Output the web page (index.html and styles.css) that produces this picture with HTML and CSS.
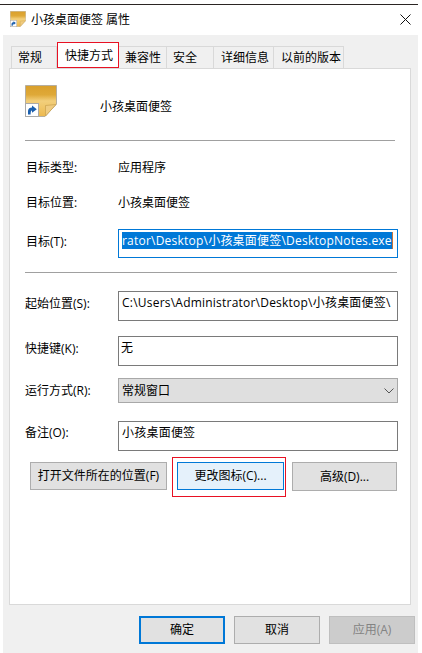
FILE: index.html
```html
<!DOCTYPE html>
<html lang="zh-CN">
<head>
    <meta charset="UTF-8">
    <title>小孩桌面便签 属性</title>
    <link rel="stylesheet" href="styles.css">
</head>
<body>
    <div class="dialog">
        <div class="titlebar">
            <svg class="title-icon" width="16" height="16" viewBox="0 0 32 32">
                <defs>
                    <linearGradient id="noteFill" x1="0" y1="0" x2="0" y2="1">
                        <stop offset="0" stop-color="#d99f2b"/>
                        <stop offset="0.3" stop-color="#dfa938"/>
                        <stop offset="0.5" stop-color="#f2cf7c"/>
                        <stop offset="1" stop-color="#edb94e"/>
                    </linearGradient>
                    <symbol id="noteIcon" viewBox="0 0 32 32">
                        <path d="M0.5 0.5 H31.5 V19 L20 31.5 H0.5 Z" fill="url(#noteFill)" stroke="#b5aea0" stroke-width="1"/>
                        <path d="M31 19.5 L20.5 31 V20.5 Z" fill="#f0cc80" stroke="#c9a04e" stroke-width="0.7"/>
                        <rect x="0.5" y="18.5" width="13" height="13" fill="#ffffff" stroke="#a9a9a9" stroke-width="1"/>
                        <path d="M3 29.5 V26 C3 23.5 5 22.5 7 22.5 V20.5 L11.8 24.2 L7 27.8 V25.6 C6 25.6 5.6 26.8 5.6 29.5 Z" fill="#1b5fae"/>
                    </symbol>
                </defs>
                <use href="#noteIcon" width="32" height="32"/>
            </svg>
            <span class="title-text">小孩桌面便签 属性</span>
            <svg class="close-icon" width="11" height="11" viewBox="0 0 11 11">
                <path d="M0.5 0.5 L10.5 10.5 M10.5 0.5 L0.5 10.5" stroke="#111111" stroke-width="1" fill="none"/>
            </svg>
        </div>

        <div class="panel">
            <div class="tabs">
                <div class="tab tab-general">常规</div>
                <div class="tab tab-active">快捷方式</div>
                <div class="tab tab-compat">兼容性</div>
                <div class="tab tab-security">安全</div>
                <div class="tab tab-details">详细信息</div>
                <div class="tab tab-previous">以前的版本</div>
            </div>

            <div class="page">
                <div class="header-row">
                    <svg class="big-icon" width="32" height="32" viewBox="0 0 32 32">
                        <use href="#noteIcon" width="32" height="32"/>
                    </svg>
                    <span class="app-name">小孩桌面便签</span>
                </div>

                <div class="sep sep-first"></div>

                <div class="info-row">
                    <span class="label">目标类型:</span>
                    <span>应用程序</span>
                </div>
                <div class="info-row">
                    <span class="label">目标位置:</span>
                    <span>小孩桌面便签</span>
                </div>

                <div class="field-row target-row">
                    <span class="label label-input">目标(T):</span>
                    <div class="input input-focus">
                        <span class="selected">rator\Desktop\小孩桌面便签\DesktopNotes.exe</span><span class="caret"></span>
                    </div>
                </div>

                <div class="sep sep-second"></div>

                <div class="field-row start-row">
                    <span class="label label-input label-flush">起始位置(S):</span>
                    <div class="input">C:\Users\Administrator\Desktop\小孩桌面便签\</div>
                </div>
                <div class="field-row key-row">
                    <span class="label label-input label-flush">快捷键(K):</span>
                    <div class="input input-key">无</div>
                </div>
                <div class="field-row run-row">
                    <span class="label label-flush">运行方式(R):</span>
                    <div class="select">
                        <span>常规窗口</span>
                        <svg class="chevron" width="10" height="6" viewBox="0 0 10 6">
                            <path d="M0.5 0.5 L5 5 L9.5 0.5" stroke="#555555" stroke-width="1" fill="none"/>
                        </svg>
                    </div>
                </div>
                <div class="field-row note-row">
                    <span class="label label-note label-flush">备注(O):</span>
                    <div class="input">小孩桌面便签</div>
                </div>

                <div class="action-row">
                    <div class="btn btn-open">打开文件所在的位置(F)</div>
                    <div class="btn btn-icon">更改图标(C)...</div>
                    <div class="btn btn-adv">高级(D)...</div>
                </div>
            </div>

            <div class="footer">
                <div class="btn btn-foot btn-ok">确定</div>
                <div class="btn btn-foot">取消</div>
                <div class="btn btn-foot btn-disabled">应用(A)</div>
            </div>

            <div class="mark mark-tab"></div>
            <div class="mark mark-btn"></div>
        </div>
    </div>
</body>
</html>
```

FILE: styles.css
```css
html, body {
    margin: 0;
    padding: 0;
    background-color: #ffffff;
}

body {
    width: 422px;
    height: 653px;
    overflow: hidden;
    color: #000000;
    font-family: "Open Sans", "Noto Sans CJK SC", sans-serif;
    font-size: 12px;
    line-height: 16px;
}

.dialog {
    width: 418px;
    height: 653px;
    border-top: 1px solid #2b2523;
    margin-top: 4px;
    box-sizing: border-box;
    display: flex;
    flex-direction: column;
}

.titlebar {
    height: 30px;
    flex: none;
    box-sizing: border-box;
    display: flex;
    align-items: center;
    padding: 0 7px 2px 10px;
}

.title-icon {
    margin-right: 5px;
}

.title-text {
    flex: 1;
    margin-top: 2px;
}

.panel {
    position: relative;
    flex: 1;
    margin-left: 3px;
    background-color: #f0f0f0;
    padding: 11px 0 0 6px;
}

.tabs {
    display: flex;
    height: 22px;
    padding-left: 2px;
}

.tab {
    box-sizing: border-box;
    border: 1px solid #d9d9d9;
    border-bottom: none;
    border-left: none;
    display: flex;
    align-items: center;
    padding-left: 6px;
}

.tab-general {
    width: 46px;
    border-left: 1px solid #d9d9d9;
}

.tab-active {
    width: 62px;
    height: 26px;
    margin-top: -4px;
    padding-left: 8px;
    padding-top: 1px;
    background-color: #ffffff;
    border: none;
}

.tab-compat {
    width: 48px;
}

.tab-security {
    width: 47px;
}

.tab-details {
    width: 60px;
    padding-left: 7px;
}

.tab-previous {
    width: 70px;
    padding-left: 7px;
}

.page {
    box-sizing: border-box;
    width: 402px;
    height: 537px;
    border: 1px solid #d9d9d9;
    background-color: #ffffff;
    padding: 16px 0 0 15px;
}

.header-row {
    display: flex;
    align-items: flex-start;
    height: 32px;
}

.app-name {
    margin-left: 43px;
    margin-top: 14px;
}

.sep {
    height: 1px;
    background-color: #a0a0a0;
}

.sep-first {
    margin-top: 23px;
    margin-bottom: 19px;
    width: 370px;
}

.sep-second {
    margin-top: 14px;
    width: 372px;
}

.info-row {
    display: flex;
    align-items: center;
    height: 16px;
    margin-bottom: 19px;
}

.label {
    width: 93px;
    flex: none;
    padding-left: 1px;
    box-sizing: border-box;
}

.label-input {
    padding-bottom: 4px;
}

.label-note {
    padding-bottom: 6px;
}

.label-flush {
    padding-left: 0;
}

.field-row {
    display: flex;
    align-items: center;
}

.target-row {
    margin-top: -1px;
}

.start-row {
    margin-top: 18px;
}

.key-row {
    margin-top: 15px;
}

.run-row {
    margin-top: 12px;
}

.note-row {
    margin-top: 18px;
}

.input {
    box-sizing: border-box;
    flex: none;
    width: 280px;
    height: 30px;
    border: 1px solid #7a7a7a;
    padding: 3px 3px 0;
    white-space: nowrap;
    overflow: hidden;
    background-color: #ffffff;
    letter-spacing: 0.22px;
}

.input-focus {
    border-color: #0078d7;
    height: 29px;
    padding-top: 2px;
    display: flex;
    align-items: flex-start;
}

.input-key {
    padding-left: 2px;
}

.selected {
    background-color: #0078d7;
    color: #ffffff;
    height: 17px;
    line-height: 17px;
}

.caret {
    flex: none;
    width: 1px;
    height: 17px;
    background-color: #c8743a;
}

.select {
    box-sizing: border-box;
    flex: none;
    width: 280px;
    height: 25px;
    border: 1px solid #a8a8a8;
    background-color: #dfdfdf;
    padding: 0 3px 0 3px;
    display: flex;
    align-items: center;
    justify-content: space-between;
}

.action-row {
    display: flex;
    margin-top: 11px;
    margin-left: 5px;
}

.btn {
    box-sizing: border-box;
    flex: none;
    height: 28px;
    border: 1px solid #adadad;
    background-color: #e1e1e1;
    display: flex;
    align-items: center;
    justify-content: center;
    white-space: nowrap;
}

.btn-open {
    width: 137px;
}

.btn-icon {
    width: 107px;
    margin-left: 10px;
    border-color: #0078d7;
    background-color: #e5f1fb;
}

.btn-adv {
    width: 105px;
    height: 29px;
    margin-left: 8px;
}

.footer {
    display: flex;
    gap: 9px;
    margin-top: 11px;
    margin-left: 130px;
}

.btn-foot {
    width: 86px;
}

.btn-ok {
    border: 2px solid #0078d7;
}

.btn-disabled {
    background-color: #cccccc;
    border-color: #bfbfbf;
    color: #838383;
}

.mark {
    position: absolute;
    box-sizing: border-box;
    border: 1px solid #e81123;
    pointer-events: none;
}

.mark-tab {
    left: 54px;
    top: 7px;
    width: 62px;
    height: 26px;
}

.mark-btn {
    left: 169px;
    top: 422px;
    width: 114px;
    height: 40px;
}
```
